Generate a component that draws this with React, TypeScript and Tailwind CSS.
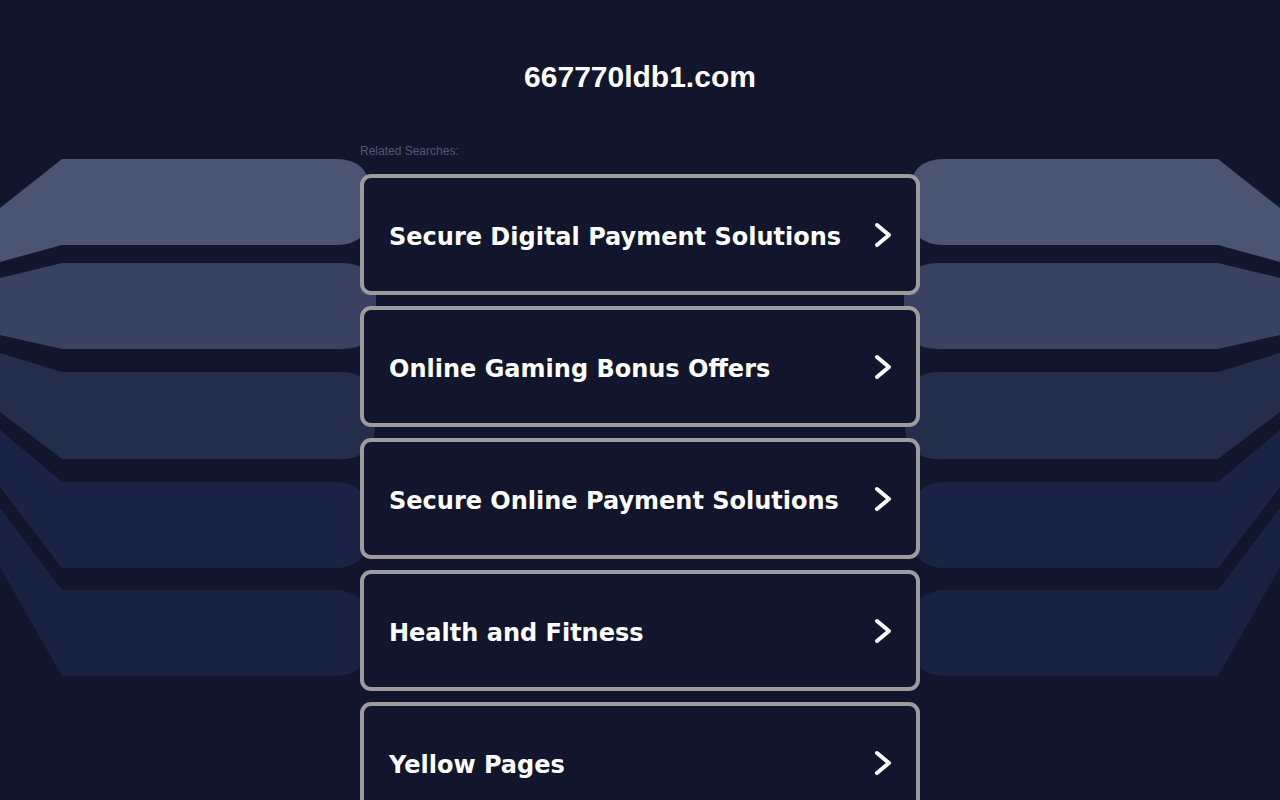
import React from "react";

const items = [
  "Secure Digital Payment Solutions",
  "Online Gaming Bonus Offers",
  "Secure Online Payment Solutions",
  "Health and Fitness",
  "Yellow Pages",
];

type Shape = { tl: number; t: number; b: number; bl: number; R: number; fill: string };

const shapes: Shape[] = [
  { tl: 208, t: 159, b: 245, bl: 262, R: 370, fill: "#4b5573" },
  { tl: 278, t: 263, b: 349, bl: 335, R: 376, fill: "#394262" },
  { tl: 353, t: 372, b: 459, bl: 412, R: 375, fill: "#252d4c" },
  { tl: 430, t: 482, b: 568, bl: 487, R: 368, fill: "url(#dots4)" },
  { tl: 508, t: 590, b: 676, bl: 567, R: 368, fill: "url(#dots5)" },
];

function shapePath(s: Shape) {
  const r = 34;
  return `M0 ${s.tl} L62 ${s.t} L${s.R - r} ${s.t} Q${s.R} ${s.t} ${s.R} ${s.t + r} L${s.R} ${s.b - r} Q${s.R} ${s.b} ${s.R - r} ${s.b} L62 ${s.b} L0 ${s.bl} Z`;
}

function Background() {
  return (
    <svg
      className="absolute inset-0 pointer-events-none"
      width="1280"
      height="800"
      viewBox="0 0 1280 800"
    >
      <defs>
        <pattern id="dots4" width="3" height="3" patternUnits="userSpaceOnUse">
          <rect width="3" height="3" fill="#1b2346" />
          <circle cx="1" cy="1" r="0.5" fill="#181f40" />
        </pattern>
        <pattern id="dots5" width="3" height="3" patternUnits="userSpaceOnUse">
          <rect width="3" height="3" fill="#1a2244" />
          <circle cx="1" cy="1" r="0.5" fill="#171e3d" />
        </pattern>
      </defs>
      <g>
        {shapes.map((s, i) => (
          <path key={i} d={shapePath(s)} fill={s.fill} />
        ))}
      </g>
      <g transform="translate(1280,0) scale(-1,1)">
        {shapes.map((s, i) => (
          <path key={i} d={shapePath(s)} fill={s.fill} />
        ))}
      </g>
    </svg>
  );
}

function Chevron() {
  return (
    <svg width="18" height="26" viewBox="0 0 18 26" className="shrink-0">
      <polyline
        points="3,3 15,13 3,23"
        fill="none"
        stroke="#ffffff"
        strokeWidth="4"
        strokeLinecap="round"
        strokeLinejoin="round"
      />
    </svg>
  );
}

export default function App() {
  return (
    <div className="relative min-h-screen w-full overflow-hidden bg-[#11162c]">
      <Background />
      <div className="relative mx-auto flex w-[560px] flex-col pt-[59px]">
        <h1 className="text-center text-[30px] leading-[36px] font-bold text-white [font-family:'Liberation_Sans',Arial,sans-serif]">
          667770ldb1.com
        </h1>
        <div className="mt-[49px] mb-[16px] text-[12px] leading-[14px] text-[#4f5876] [font-family:'Liberation_Sans',Arial,sans-serif]">
          Related Searches:
        </div>
        <div className="flex flex-col gap-[11px]">
          {items.map((t) => (
            <a
              key={t}
              href="#"
              className="flex h-[121px] items-center justify-between rounded-[11px] border-[4px] border-[#9c9c9c] bg-[#11162c] pl-[25px] pr-[24px] text-white no-underline"
            >
              <span className="pt-[4px] text-[24px] font-bold [font-family:'DejaVu_Sans',Verdana,sans-serif]">
                {t}
              </span>
              <Chevron />
            </a>
          ))}
        </div>
      </div>
    </div>
  );
}
